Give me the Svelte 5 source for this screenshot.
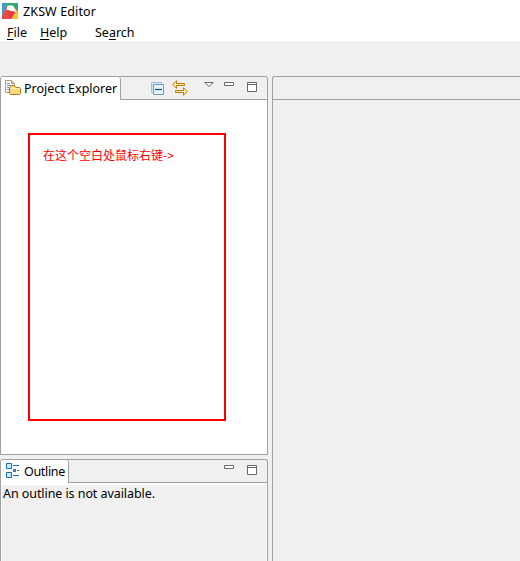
<script>
  const menus = [
    { before: '', key: 'F', after: 'ile', width: 33 },
    { before: '', key: 'H', after: 'elp', width: 55 },
    { before: 'Se', key: 'a', after: 'rch', width: 40 }
  ];
</script>

{#snippet windowButtons()}
  <svg class="min" width="10" height="4" viewBox="0 0 10 4"><path d="M.5.5h9v3h-9z" fill="#fff" stroke="#696969" /></svg>
  <svg class="max" width="10" height="10" viewBox="0 0 10 10"><path d="M.5.5h9v9h-9zM1 2.5h8" fill="#fff" stroke="#696969" /></svg>
{/snippet}

<div class="window">
  <header class="title">
    <svg width="16" height="16" viewBox="0 0 16 16">
      <path d="M0 0h16v16H0z" fill="#f2c530" />
      <path d="M0 0h6L0 14z" fill="#3a9fd0" />
      <path d="M5 0h11v9L11 3H4z" fill="#35aa6d" />
      <path d="M5 2.500L0 13v3h9l4-7z" fill="#ea4a4c" />
      <path d="M5.500 2.500H11l3 6.500-9.500-2z" fill="#fff" />
      <path d="M4.500 7l9 2L9 16 6 11z" fill="#e23f45" />
    </svg>
    <span class="label">ZKSW Editor</span>
  </header>
  <nav>
    {#each menus as m}
      <span class="menu" style="width: {m.width}px">{m.before}<u>{m.key}</u>{m.after}</span>
    {/each}
  </nav>
  <main>
    <div class="left">
      <section class="panel explorer">
        <div class="head">
          <div class="tab">
            <svg width="16" height="16" viewBox="0 0 16 16">
              <path d="M.5.5h6l3 3v9h-9z" fill="#f3f8ff" stroke="#b3a069" />
              <path d="M6.5.5v3h3" fill="#d9c789" stroke="#b3a069" />
              <path d="M2 3.5h3M2 5.5h5M2 7.5h3M2 9.5h2" stroke="#7b9ccb" />
              <path d="M4.500 7.500L6 5.500h3.500L11 7.500h3.500l1 1v5l-1 1h-9l-1-1z" fill="#fbd77e" stroke="#b87a18" />
              <path d="M6 8.5h8.5" stroke="#fff0bd" />
            </svg>
            <span>Project Explorer</span>
          </div>
          <div class="tools">
            <svg class="collapse" width="13" height="13" viewBox="0 0 13 13">
              <path d="M.5 .5h10v10H.5z" fill="#d6e9f5" stroke="#a5bfd7" />
              <path d="M2.500 2.500h10v10h-10z" fill="#e3f4fc" stroke="#7897b9" />
              <path d="M4 7.500h7" stroke="#074f8d" stroke-width="1.200" />
            </svg>
            <svg class="link" width="16" height="16" viewBox="0 0 16 16">
              <path d="M.8 4.500L4.500.7v2.800h8v2h-8v2.800z" fill="#ffefad" stroke="#bd7c0b" />
              <path d="M15.200 11.500l-3.700-3.800v2.800h-8v2h8v2.800z" fill="#ffefad" stroke="#bd7c0b" />
            </svg>
            <svg class="drop" width="10" height="5" viewBox="0 0 10 5"><path d="M.7.5h8.600L5 4.500z" fill="#fff" stroke="#696969" /></svg>
            {@render windowButtons()}
          </div>
        </div>
        <div class="body"><div class="callout">在这个空白处鼠标右键-&gt;</div></div>
      </section>
      <section class="panel outline">
        <div class="head">
          <div class="tab">
            <svg width="16" height="16" viewBox="0 0 16 16">
              <path d="M1.500 1.500h5v5h-5zM1.500 10.500h5v5h-5z" fill="#c9eafa" stroke="#1b6fae" />
              <path d="M8 3.500h6M12 8.500h2M8 13.500h6" stroke="#1b6fae" />
              <path d="M8.500 7.500h2v2h-2z" fill="#c9eafa" stroke="#1b5b93" />
            </svg>
            <span>Outline</span>
          </div>
          <div class="tools">{@render windowButtons()}</div>
        </div>
        <div class="body"><div class="message"><span>An outline is not available.</span></div></div>
      </section>
    </div>
    <section class="editor"><div class="strip"></div></section>
  </main>
</div>

<style>
  :global(body) { margin: 0; }
  .window {
    width: 520px; height: 561px; overflow: hidden; background: #f0f0f0;
    display: flex; flex-direction: column; color: #000;
    font: 13px/18px "Noto Sans", "Noto Sans CJK SC", sans-serif;
  }
  .window * { box-sizing: border-box; }
  svg { display: block; flex: none; }
  span { white-space: nowrap; }
  .title { height: 23px; flex: none; background: #fff; display: flex; padding: 3px 0 0 2px; gap: 5px; }
  .title .label { font-size: 12.500px; letter-spacing: .12px; }
  nav { height: 18px; flex: none; background: #fff; display: flex; padding-left: 7px; line-height: 19px; font-size: 12.500px; }
  u { text-decoration-thickness: 1px; text-underline-offset: 2px; }
  main { flex: 1; display: flex; gap: 4px; padding-top: 35px; min-height: 0; }
  .left { width: 268px; flex: none; display: flex; flex-direction: column; gap: 4px; }
  .panel { border: 1px solid #a0a0a0; border-radius: 3px 3px 0 0; display: flex; flex-direction: column; }
  .explorer { height: 379px; flex: none; }
  .outline { flex: 1; border-bottom: 0; }
  .head { height: 23px; flex: none; display: flex; justify-content: space-between; border-bottom: 1px solid #a0a0a0; }
  .tab {
    height: 23px; background: #fff; border-right: 1px solid #a0a0a0; border-radius: 2px 3px 0 0;
    display: flex; gap: 3px; padding: 3px 0 0 4px; font-size: 12.500px;
  }
  .tab span { line-height: 18px; }
  .explorer .tab { width: 120px; }
  .outline .tab { width: 68px; }
  .outline .tab svg { margin-top: -1px; }
  .outline .tab span { letter-spacing: -.33px; }
  .tools { display: flex; padding: 5px 10px 0 0; }
  .collapse { margin-right: 8px; }
  .link { margin: -2px 16px 0 0; }
  .drop { margin-right: 10px; }
  .min { margin-right: 13px; }
  .body { flex: 1; background: #fff; }
  .explorer .body { padding: 33px 0 0 27px; }
  .callout {
    width: 198px; height: 288px; border: 2px solid #f00; color: #f00; padding: 11px 0 0 13px;
    font: 12px/18px "Noto Sans CJK SC", sans-serif;
  }
  .outline .body { padding: 2px 1px 0; display: flex; }
  .message { flex: 1; background: #f0f0f0; line-height: 18px; font-size: 12.500px; letter-spacing: -.07px; padding-left: 1px; }
  .editor { flex: 1; border: 1px solid #a0a0a0; border-width: 1px 0 0 1px; border-top-left-radius: 3px; }
  .strip { height: 23px; border-bottom: 1px solid #a0a0a0; }
</style>
